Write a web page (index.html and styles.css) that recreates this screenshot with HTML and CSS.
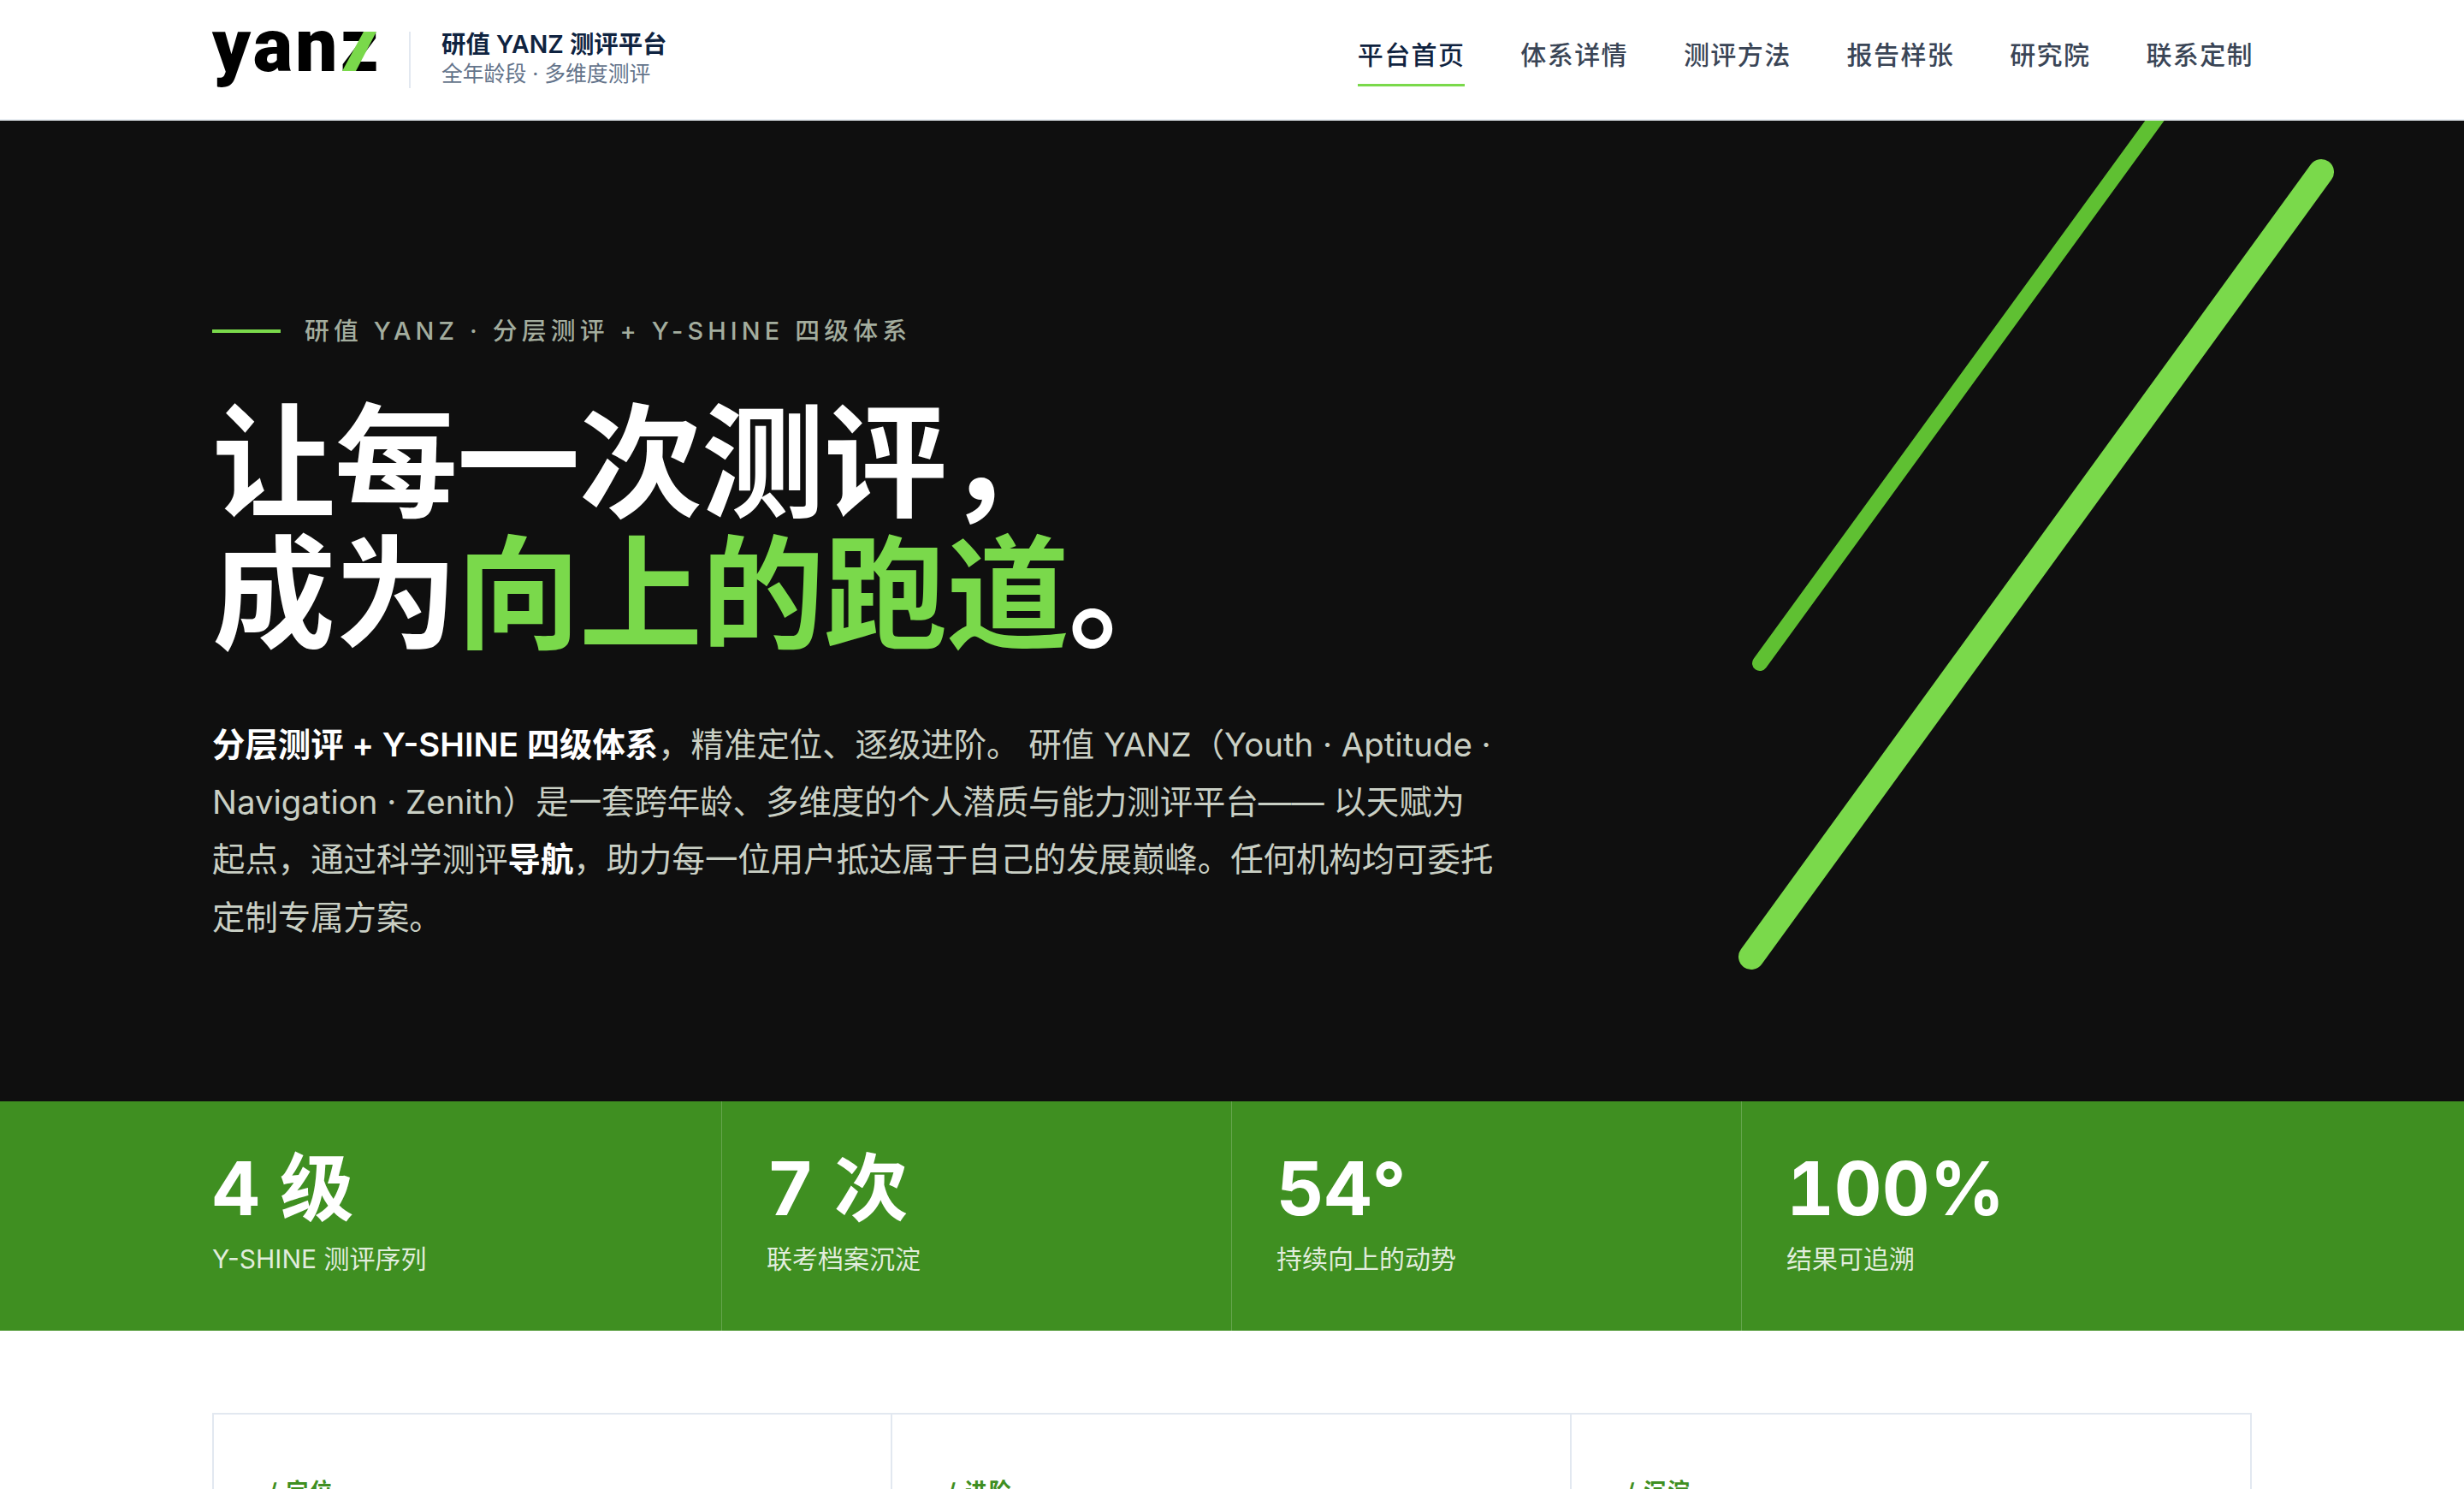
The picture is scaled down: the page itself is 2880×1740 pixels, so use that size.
FILE: index.html
```html
<!DOCTYPE html>
<html lang="zh">
<head>
    <meta charset="UTF-8">
    <meta name="viewport" content="width=device-width, initial-scale=1.0">
    <title>研值 YANZ 测评平台</title>
    <link rel="stylesheet" href="styles.css">
</head>
<body>
<div class="page">
    <header class="site-header">
        <div class="brand">
            <div class="logo">yan<span class="logo-z">z<svg class="logo-slash" viewBox="0 0 40 46"><polygon points="25,0 40,0 16,46 0,46"/></svg></span></div>
            <div class="brand-text">
                <div class="brand-name">研值 YANZ 测评平台</div>
                <div class="brand-sub">全年龄段 · 多维度测评</div>
            </div>
        </div>
        <nav class="nav">
            <a class="nav-link active">平台首页</a>
            <a class="nav-link">体系详情</a>
            <a class="nav-link">测评方法</a>
            <a class="nav-link">报告样张</a>
            <a class="nav-link">研究院</a>
            <a class="nav-link">联系定制</a>
        </nav>
    </header>

    <section class="hero">
        <svg class="stripes" viewBox="0 0 800 1146">
            <line x1="553" y1="-20" x2="77" y2="634" stroke="#5fc032" stroke-width="18" stroke-linecap="round"/>
            <line x1="733" y1="60" x2="67" y2="977" stroke="#7ad94b" stroke-width="30" stroke-linecap="round"/>
        </svg>
        <div class="eyebrow"><span class="eyebrow-line"></span>研值 YANZ · 分层测评 + Y-SHINE 四级体系</div>
        <h1 class="hero-title">让每一次测评，<br>成为<span class="accent">向上的跑道</span>。</h1>
        <p class="hero-desc"><strong>分层测评 + Y-SHINE 四级体系</strong>，精准定位、逐级进阶。 研值 YANZ（Youth · Aptitude · Navigation · Zenith）是一套跨年龄、多维度的个人潜质与能力测评平台—— 以天赋为起点，通过科学测评<strong>导航</strong>，助力每一位用户抵达属于自己的发展巅峰。任何机构均可委托定制专属方案。</p>
    </section>

    <section class="stats">
        <div class="stat">
            <div class="stat-num">4 级</div>
            <div class="stat-label">Y-SHINE 测评序列</div>
        </div>
        <div class="stat">
            <div class="stat-num">7 次</div>
            <div class="stat-label">联考档案沉淀</div>
        </div>
        <div class="stat">
            <div class="stat-num">54°</div>
            <div class="stat-label">持续向上的动势</div>
        </div>
        <div class="stat">
            <div class="stat-num">100%</div>
            <div class="stat-label">结果可追溯</div>
        </div>
    </section>

    <section class="pillars">
        <div class="pillar-grid">
            <div class="pillar"><div class="pillar-tag">/ 定位</div></div>
            <div class="pillar"><div class="pillar-tag">/ 进阶</div></div>
            <div class="pillar"><div class="pillar-tag">/ 沉淀</div></div>
        </div>
    </section>
</div>
</body>
</html>
```

FILE: styles.css
```css
* {
    box-sizing: border-box;
}
html, body {
    margin: 0;
    padding: 0;
}
body {
    background: #fff;
    color: #0f2340;
    font-family: Inter, "Noto Sans CJK SC", sans-serif;
}
.page {
    height: 1740px;
    overflow: hidden;
}

/* header */
.site-header {
    display: flex;
    align-items: center;
    justify-content: space-between;
    height: 141px;
    padding: 0 248px;
    border-bottom: 2px solid #e8edf2;
}
.brand {
    display: flex;
    align-items: center;
}
.logo {
    width: 194px;
    height: 66px;
    font-family: Roboto, sans-serif;
    font-size: 87px;
    font-weight: 900;
    line-height: 33px;
    letter-spacing: 3.3px;
    white-space: nowrap;
    color: #000;
}
.logo-z {
    position: relative;
    display: inline-block;
}
.logo-slash {
    position: absolute;
    left: 2px;
    top: 0;
    width: 40px;
    height: 46px;
    fill: #7ad94b;
}
.brand-text {
    margin-left: 36px;
    padding-left: 36px;
    border-left: 2px solid #e2e8f0;
    height: 66px;
    display: flex;
    flex-direction: column;
    justify-content: center;
    padding-bottom: 3px;
}
.brand-name {
    font-size: 28.4px;
    font-weight: 600;
    line-height: 36px;
    color: #0f2340;
}
.brand-sub {
    font-size: 24.8px;
    line-height: 32px;
    color: #64748b;
}
.nav {
    display: flex;
    gap: 65px;
    margin-bottom: 14px;
    margin-right: -2px;
}
.nav-link {
    padding: 16px 0 14px;
    border-bottom: 3px solid transparent;
    font-size: 30px;
    font-weight: 500;
    letter-spacing: 1.4px;
    color: #3a4556;
}
.nav-link.active {
    color: #0f2340;
    border-bottom-color: #7ad94b;
}

/* hero */
.hero {
    position: relative;
    height: 1146px;
    padding: 226px 248px 0;
    background: #0f0f0f;
    overflow: hidden;
}
.stripes {
    position: absolute;
    left: 1980px;
    top: 0;
    width: 800px;
    height: 1146px;
}
.eyebrow {
    display: flex;
    align-items: center;
    gap: 28px;
    font-size: 28.8px;
    line-height: 40px;
    letter-spacing: 0.18em;
    color: #a3ad9e;
    font-weight: 500;
}
.eyebrow-line {
    width: 80px;
    height: 4px;
    background: #7ad94b;
}
.hero-title {
    margin: 57px 0 0;
    font-size: 144px;
    font-weight: 700;
    line-height: 154px;
    letter-spacing: -1px;
    color: #fff;
}
.accent {
    color: #7ad94b;
}
.hero-desc {
    position: relative;
    margin: 65px 0 0;
    max-width: 1500px;
    font-size: 38.4px;
    line-height: 67.2px;
    color: #c9cfc4;
}
.hero-desc strong {
    color: #fff;
    font-weight: 600;
}

/* stats */
.stats {
    display: grid;
    grid-template-columns: repeat(4, 596px);
    height: 268px;
    padding: 0 248px;
    background: #3f8f21;
}
.stat {
    padding: 52px 52px 0;
    border-right: 1px solid rgba(255, 255, 255, 0.2);
}
.stat:first-child {
    padding-left: 0;
}
.stat:last-child {
    border-right: none;
}
.stat-num {
    font-size: 86.4px;
    font-weight: 700;
    line-height: 100px;
    font-variant-numeric: tabular-nums;
    color: #fff;
}
.stat-label {
    margin-top: 12px;
    font-size: 30px;
    line-height: 40px;
    color: rgba(255, 255, 255, 0.85);
}

/* pillars */
.pillars {
    padding: 96px 248px 0;
}
.pillar-grid {
    display: grid;
    grid-template-columns: repeat(3, 1fr);
    border: 2px solid #e2e8f0;
    height: 400px;
}
.pillar {
    padding: 72px 64px;
    border-right: 2px solid #e2e8f0;
}
.pillar:last-child {
    border-right: none;
}
.pillar-tag {
    font-size: 26px;
    font-weight: 600;
    line-height: 36px;
    letter-spacing: 2px;
    color: #3f8f21;
}
```
